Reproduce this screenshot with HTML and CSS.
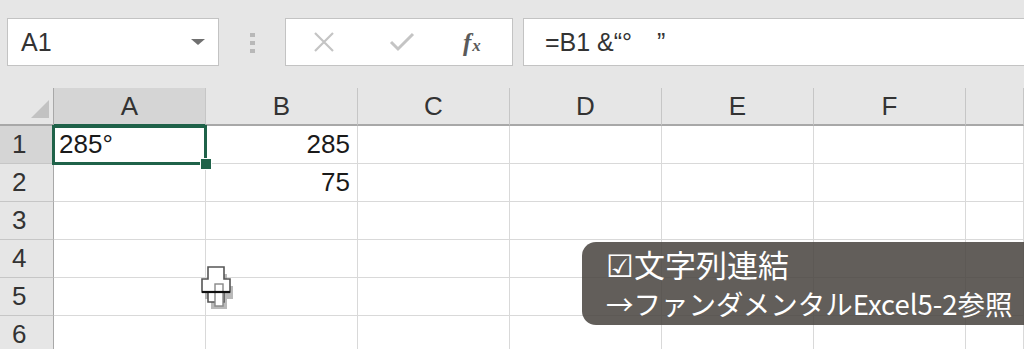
FILE: index.html
```html
<!DOCTYPE html>
<html lang="ja">
<head>
    <meta charset="UTF-8">
    <title>文字列連結</title>
    <link rel="stylesheet" href="styles.css">
</head>
<body>
    <div class="toolbar">
        <div class="namebox">
            <span>A1</span>
            <span class="caret"></span>
        </div>
        <div class="grip"><i></i><i></i><i></i></div>
        <div class="fxbtns">
            <svg class="ico-x" width="22" height="20" viewBox="0 0 22 20">
                <path d="M2 1 L20 19 M20 1 L2 19" stroke="#c4c4c4" stroke-width="2.2" fill="none"/>
            </svg>
            <svg class="ico-ok" width="26" height="20" viewBox="0 0 26 20">
                <path d="M2 10 L9 17 L24 2" stroke="#c4c4c4" stroke-width="3" fill="none"/>
            </svg>
            <span class="fx">f<sub>x</sub></span>
        </div>
        <div class="formula">=B1 &amp;“°　”</div>
    </div>

    <div class="sheet">
        <div class="corner"><span class="tri"></span></div>
        <div class="colhead sel">A</div>
        <div class="colhead">B</div>
        <div class="colhead">C</div>
        <div class="colhead">D</div>
        <div class="colhead">E</div>
        <div class="colhead">F</div>
        <div class="colhead"></div>

        <div class="rowhead sel">1</div>
        <div class="cell active">285°<span class="handle"></span></div>
        <div class="cell num">285</div>
        <div class="cell"></div><div class="cell"></div><div class="cell"></div><div class="cell"></div><div class="cell"></div>

        <div class="rowhead">2</div>
        <div class="cell"></div>
        <div class="cell num">75</div>
        <div class="cell"></div><div class="cell"></div><div class="cell"></div><div class="cell"></div><div class="cell"></div>

        <div class="rowhead">3</div>
        <div class="cell"></div><div class="cell"></div><div class="cell"></div><div class="cell"></div><div class="cell"></div><div class="cell"></div><div class="cell"></div>

        <div class="rowhead">4</div>
        <div class="cell"></div><div class="cell"></div><div class="cell"></div><div class="cell"></div><div class="cell"></div><div class="cell"></div><div class="cell"></div>

        <div class="rowhead">5</div>
        <div class="cell"></div><div class="cell"></div><div class="cell"></div><div class="cell"></div><div class="cell"></div><div class="cell"></div><div class="cell"></div>

        <div class="rowhead">6</div>
        <div class="cell"></div><div class="cell"></div><div class="cell"></div><div class="cell"></div><div class="cell"></div><div class="cell"></div><div class="cell"></div>
    </div>

    <!-- mouse pointer over the sheet -->
    <svg class="pointer" width="40" height="50" viewBox="0 0 40 50">
        <path d="M10 3 H26 V15 H32 V28 H26 V38 H10 V28 H4 V15 H10 Z" transform="translate(3 7)" fill="#a8a8a8" opacity="0.8"/>
        <path d="M10 3 H26 V15 H32 V28 H26 V38 H10 V28 H4 V15 H10 Z" fill="#fff" stroke="#555" stroke-width="1.6"/>
        <rect x="17" y="20" width="8" height="22" fill="#fff" stroke="#888" stroke-width="1.4"/>
        <path d="M4 28 H32" stroke="#111" stroke-width="2.2"/>
    </svg>

    <div class="caption">
        <div class="cap-title">☑文字列連結</div>
        <div class="cap-ref">→ファンダメンタルExcel5-2参照</div>
    </div>
</body>
</html>
```

FILE: styles.css
```css
:root {
    --bar-bg: #e6e6e6;
    --head-bg: #e6e6e6;
    --head-sel: #d5d5d5;
    --grid: #d9d9d9;
    --green: #1f6249;
}

body {
    margin: 0;
    width: 1024px;
    height: 349px;
    overflow: hidden;
    position: relative;
    background: #fff;
    font-family: "Liberation Sans", Arial, sans-serif;
    color: #222;
}

.toolbar {
    height: 88px;
    box-sizing: border-box;
    padding-top: 18px;
    display: flex;
    align-items: flex-start;
    background: var(--bar-bg);
}

.namebox,
.fxbtns,
.formula {
    height: 48px;
    box-sizing: border-box;
    background: #fff;
    border: 1px solid #c3c3c3;
    display: flex;
    align-items: center;
}

.namebox {
    margin-left: 7px;
    width: 212px;
    padding: 0 13px 0 13px;
    justify-content: space-between;
    font-size: 25px;
    color: #333;
}

.caret {
    width: 0;
    height: 0;
    border-left: 7px solid transparent;
    border-right: 7px solid transparent;
    border-top: 6px solid #707070;
}

.grip {
    margin: 15px 0 0 31px;
    width: 6px;
    display: flex;
    flex-direction: column;
    gap: 4px;
}

.grip i {
    display: block;
    width: 5px;
    height: 4px;
    background: #b8b8b8;
}

.fxbtns {
    margin-left: 29px;
    width: 228px;
    padding-left: 27px;
}

.ico-ok {
    margin-left: 54px;
}

.fx {
    margin-left: 48px;
    font-family: "Liberation Serif", "Times New Roman", serif;
    font-style: italic;
    font-weight: bold;
    font-size: 25px;
    color: #5a5a5a;
    line-height: 1;
}

.fx sub {
    font-size: 17px;
    vertical-align: 0;
    margin-left: 1px;
}

.formula {
    margin-left: 10px;
    margin-right: -10px;
    flex: 1;
    padding-left: 21px;
    font-size: 25px;
    color: #333;
}

.sheet {
    display: grid;
    grid-template-columns: 54px repeat(6, 152px) 1fr;
    grid-auto-rows: 38px;
}

.corner,
.colhead,
.rowhead,
.cell {
    box-sizing: border-box;
    border-right: 1px solid var(--grid);
    border-bottom: 1px solid var(--grid);
}

.corner {
    background: var(--head-bg);
    border-right: 1px solid #a8a8a8;
    border-bottom: 2px solid #a8a8a8;
    position: relative;
}

.tri {
    position: absolute;
    right: 4px;
    bottom: 6px;
    width: 0;
    height: 0;
    border-left: 18px solid transparent;
    border-bottom: 18px solid #c2c2c2;
}

.colhead {
    background: var(--head-bg);
    border-right-color: #c6c6c6;
    border-bottom: 2px solid #a8a8a8;
    display: flex;
    align-items: center;
    justify-content: center;
    font-size: 26px;
    color: #333;
}

.rowhead {
    background: var(--head-bg);
    border-right: 1px solid #a8a8a8;
    border-bottom-color: #c6c6c6;
    display: flex;
    align-items: center;
    padding-left: 12px;
    font-size: 26px;
    color: #333;
}

.colhead.sel,
.rowhead.sel {
    background: var(--head-sel);
}

.colhead.sel {
    border-bottom-color: var(--green);
}

.cell {
    display: flex;
    align-items: center;
    padding: 0 7px 0 5px;
    font-size: 26px;
    color: #1a1a1a;
}

.cell.num {
    justify-content: flex-end;
}

.cell.active {
    position: relative;
}

.cell.active::after {
    content: "";
    position: absolute;
    left: -2px;
    top: -1px;
    right: -2px;
    bottom: -2px;
    border: 3px solid var(--green);
}

.handle {
    position: absolute;
    right: -7px;
    bottom: -7px;
    width: 10px;
    height: 10px;
    background: var(--green);
    border: 1px solid #fff;
    z-index: 2;
}

.pointer {
    position: absolute;
    left: 198px;
    top: 264px;
}

.caption {
    position: absolute;
    left: 582px;
    top: 242px;
    width: 460px;
    height: 83px;
    box-sizing: border-box;
    padding: 2px 0 0 24px;
    border-radius: 14px;
    background: rgba(72, 67, 63, 0.86);
    color: #fff;
    font-family: "Noto Sans CJK JP", "Noto Sans", sans-serif;
}

.cap-title {
    font-size: 31px;
    line-height: 40px;
}

.cap-ref {
    font-size: 27.5px;
    line-height: 38px;
}
```
